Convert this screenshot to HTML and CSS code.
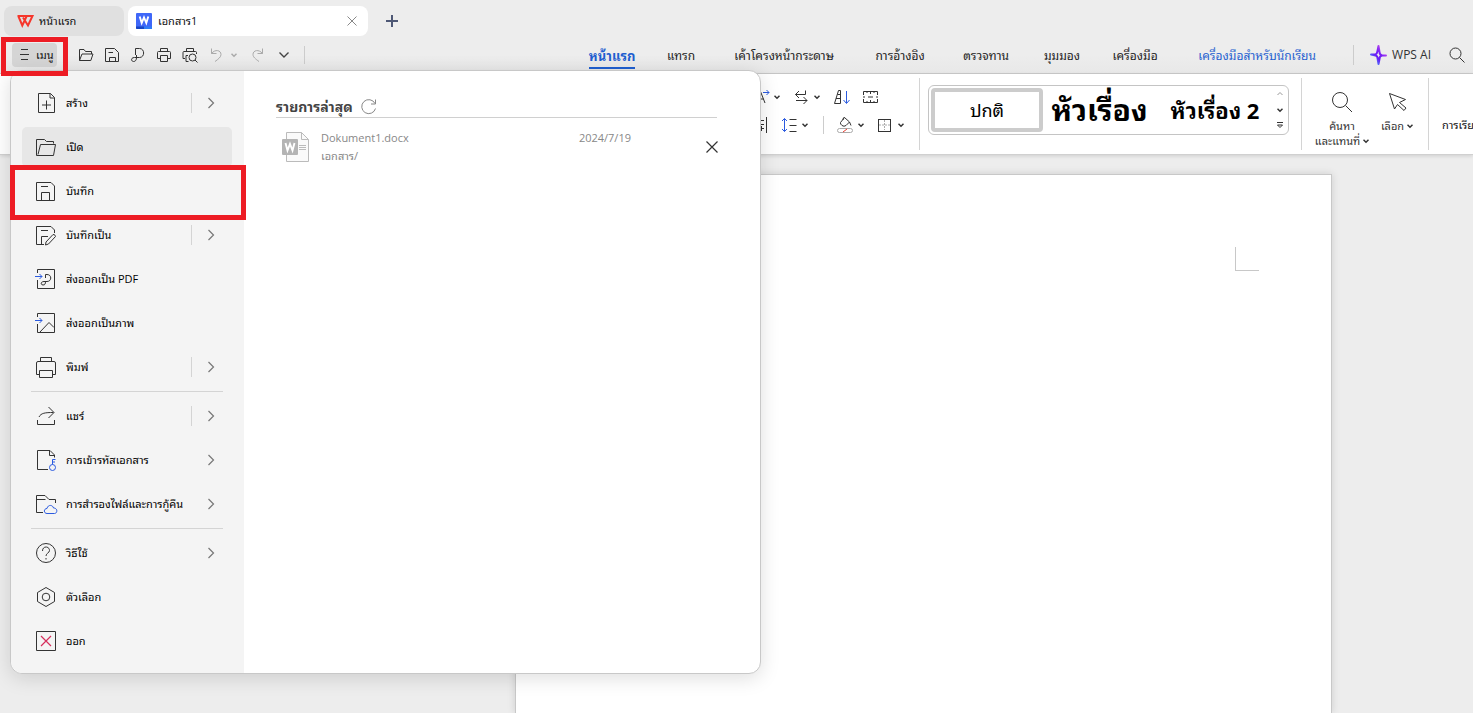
FILE: index.html
```html
<!DOCTYPE html>
<html lang="th">
<head>
<meta charset="utf-8">
<meta name="viewport" content="width=device-width, initial-scale=1">
<title>เอกสาร1</title>
<link rel="stylesheet" href="styles.css">
</head>
<body>
<svg class="defs" aria-hidden="true">
  <defs>
    <linearGradient id="ai" x1="0" y1="1" x2="1" y2="0">
      <stop offset="0" stop-color="#35c8ff"/><stop offset=".4" stop-color="#6a1cf5"/><stop offset=".6" stop-color="#7a22f5"/><stop offset="1" stop-color="#f56be8"/>
    </linearGradient>
    <symbol id="caret" viewBox="0 0 6 6"><path d="M.5 1.8 3 4.2 5.500 1.800" fill="none" stroke="currentColor" stroke-width="1.5"/></symbol>
    <symbol id="next" viewBox="0 0 8 12"><path d="M1.500 1 6.500 6 1.500 11" fill="none" stroke="currentColor" stroke-width="1.2"/></symbol>
  </defs>
</svg>

<header>
  <div class="tabs">
    <button class="tab">
      <svg width="16" height="12" viewBox="0 0 16 12" fill="none" stroke="#f5362b" stroke-width="2"><path d="M.5 1H15.500L11 10.500 6 2.500M1.300 1 5.300 10.500 9.500 1.500"/></svg>
      <span>หน้าแรก</span>
    </button>
    <div class="tab current">
      <svg width="16" height="16" viewBox="0 0 16 16"><rect width="16" height="16" rx="1" fill="#3f67f8"/><path d="M0 13.500H8V16H1a1 1 0 0 1-1-1z" fill="#1745c4"/><path d="M8 13.500H16V16H8z" fill="#2f7cf6"/><path d="M3.700 3.500 5.700 10 8 4.500 10.300 10 12.300 3.500" fill="none" stroke="#fff" stroke-width="1.9"/></svg>
      <span>เอกสาร1</span>
      <button class="plain close" aria-label="ปิด"><svg width="10" height="10" viewBox="0 0 10 10" stroke="#888"><path d="M.5.5 9.500 9.500M9.500.5.5 9.500"/></svg></button>
    </div>
    <button class="plain add" aria-label="เพิ่ม"><svg width="12" height="12" viewBox="0 0 12 12" stroke="#4e5875" stroke-width="2"><path d="M6 0V12M0 6H12"/></svg></button>
  </div>

  <div class="toolbar">
    <button class="menu-button marked">
      <svg width="9" height="11" viewBox="0 0 9 11" stroke="#333"><path d="M1 .5H8M0 5.500H9M1 10.500H8"/></svg>
      <span>เมนู</span>
    </button>
    <div class="quick">
      <button class="plain" aria-label="เปิด"><svg width="16" height="16" viewBox="0 0 16 16" class="ico"><path d="M1.500 13.500V2.500H6L7.500 4.500H13.500V7M1.500 13.500 4 7H15L12.800 13.500z"/></svg></button>
      <button class="plain" aria-label="บันทึก"><svg width="16" height="16" viewBox="0 0 16 16" class="ico"><path d="M1.500 1.500H10.500L14.500 5.500V14.500H1.500zM4.500 5.500H9M5.500 14.500V10.500H11.500V14.500"/></svg></button>
      <button class="plain" aria-label="PDF"><svg width="16" height="16" viewBox="0 0 16 16" class="ico"><path d="M5.500 8V1.500H9.500C15 1.500 15 10.500 9.500 10.500H4.500C.5 10.500 1 14.500 3.500 14.500 5.500 14.500 6.500 13 6.500 10.500V8"/></svg></button>
      <button class="plain" aria-label="พิมพ์"><svg width="16" height="16" viewBox="0 0 16 16" class="ico"><path d="M4.500 4.500V1.500H11.500V4.500M4 11.500H1.500V5.500Q1.500 4.500 2.500 4.500H13.500Q14.500 4.500 14.500 5.500V11.500H12M4.500 8.500H11.500V14.500H4.500z"/></svg></button>
      <button class="plain" aria-label="ตัวอย่าง"><svg width="16" height="16" viewBox="0 0 16 16" class="ico"><path d="M4.500 4.500V1.500H11.500V4.500M3 11.500H1V5.500Q1 4.500 2 4.500H13.500Q14.500 4.500 14.500 5.500V7M4 14.500V8.500H6M4 14.500H6.500M13 13 15.500 15.500"/><circle cx="10.500" cy="10.500" r="3.500"/></svg></button>
      <button class="plain faint" aria-label="เลิกทำ"><svg width="16" height="16" viewBox="0 0 16 16" class="ico"><path d="M3.500 1.500V6.500H8.500M3.500 6.500C7 2 13 3 13 7.500 13 10 10.500 12 7 14.500"/></svg></button>
      <button class="plain faint small" aria-label="รายการเลิกทำ"><svg width="6" height="6"><use href="#caret"/></svg></button>
      <button class="plain faint" aria-label="ทำซ้ำ"><svg width="16" height="16" viewBox="0 0 16 16" class="ico"><path d="M12.500 1.500V6.500H7.500M12.500 6.500C9 2 3 3 3 7.500 3 10 5.500 12 9 14.500"/></svg></button>
      <button class="plain" aria-label="เพิ่มเติม"><svg width="10" height="6" viewBox="0 0 10 6" fill="none" stroke="#444" stroke-width="1.4"><path d="M.5.5 5 5 9.500.5"/></svg></button>
    </div>
    <nav class="ribbon-tabs">
      <a href="#" class="on">หน้าแรก</a>
      <a href="#">แทรก</a>
      <a href="#">เค้าโครงหน้ากระดาษ</a>
      <a href="#">การอ้างอิง</a>
      <a href="#">ตรวจทาน</a>
      <a href="#">มุมมอง</a>
      <a href="#">เครื่องมือ</a>
      <a href="#" class="student">เครื่องมือสำหรับนักเรียน</a>
    </nav>
    <div class="assist">
      <button class="plain ai">
        <svg width="17" height="20" viewBox="0 0 17 20" fill="none" stroke="url(#ai)" stroke-width="2" stroke-linejoin="round"><path d="M1 9.500H5.500Q7 9 7.500 6L8.500 1 9.500 7Q9.500 9.500 12 10.500H16 12Q9.500 11 9.500 14L8.500 19 7.500 13Q7.500 11 5.500 10.500z"/></svg>
        <span>WPS AI</span>
      </button>
      <button class="plain" aria-label="ค้นหา"><svg width="16" height="16" viewBox="0 0 16 16" class="ico"><circle cx="6.500" cy="6.500" r="5.500"/><path d="M10.500 10.500 15.500 15.500"/></svg></button>
    </div>
  </div>
</header>

<section class="ribbon">
  <div class="paragraph">
    <div class="line">
      <button class="plain split"><svg width="20" height="16" viewBox="0 0 20 16" class="ico"><path d="M5 14 9.500 2.500 14 14M6.500 10H12.500"/><path class="blue" d="M12 3.500H18M15.500 1 18 3.500 15.500 6"/></svg><svg width="6" height="6"><use href="#caret"/></svg></button>
      <button class="plain split"><svg width="20" height="16" viewBox="0 0 20 16" class="ico"><path d="M14.500 1.500V5.500H4.500M8 2 4.500 5.500 8 9M5 11.500H16M12.500 8 16 11.500 12.500 15"/></svg><svg width="6" height="6"><use href="#caret"/></svg></button>
      <button class="plain sort"><svg width="20" height="16" viewBox="0 0 20 16" class="ico"><path d="M2.500 14.500 6.500 1.500H8.500V14.500zM5.500 5.500H8.500M4 9.500H8.500"/><path class="blue" d="M14.500 2V14M11.500 11 14.500 14.500 17.500 11"/></svg></button>
      <button class="plain ruler"><svg width="20" height="16" viewBox="0 0 20 16" class="ico"><path d="M3.500 6V2.500H17.500V6M10.500 2.500V5M7 2.500V4M14 2.500V4M3.500 10V13.500H17.500V10M10.500 13.500V11M7 13.500V12M14 13.500V12M3 8H5M8 8H13M16 8H18"/></svg></button>
    </div>
    <div class="line second">
      <button class="plain"><svg width="20" height="16" viewBox="0 0 20 16" class="ico"><path d="M15.500 0V16M7 3.500H13M7 7.500H13M7 11.500H13M10.500 9V14"/></svg></button>
      <button class="plain split"><svg width="20" height="16" viewBox="0 0 20 16" class="ico"><path class="blue" d="M5.500 1.500V14.500M3 4 5.500 1.500 8 4M3 12 5.500 14.500 8 12"/><path d="M10.500 2.500H17.500M10.500 8.500H17.500M10.500 14.500H17.500"/></svg><svg width="6" height="6"><use href="#caret"/></svg></button>
      <i class="rule"></i>
      <button class="plain split"><svg width="20" height="16" viewBox="0 0 20 16" class="ico"><path d="M9.500.5 5.500 5.500Q5 7 7 8.500 9 10 11 8.500L14.500 5 9.500.5Q8 0 8 3M14.500 5 16 8.500"/><rect x="2.500" y="11.500" width="15" height="4" rx="2" fill="#fff" stroke="#aaa"/><path d="M8 15 12 12" stroke="#e53a2e"/></svg><svg width="6" height="6"><use href="#caret"/></svg></button>
      <button class="plain split borders"><svg width="20" height="16" viewBox="0 0 20 16" class="ico"><path stroke="#aaa" stroke-dasharray="2 1" d="M9.500 3V13M4 8H15"/><rect x="3.500" y="2.500" width="12" height="12"/></svg><svg width="6" height="6"><use href="#caret"/></svg></button>
    </div>
  </div>

  <div class="gallery-group">
    <div class="gallery">
      <button class="style normal">ปกติ</button>
      <button class="style h1">หัวเรื่อง</button>
      <button class="style h2">หัวเรื่อง 2</button>
      <div class="scroll">
        <svg width="6" height="6" viewBox="0 0 6 6" class="ico"><path stroke="#999" d="M.5 4 3 1.500 5.500 4"/></svg>
        <svg width="6" height="6"><use href="#caret"/></svg>
        <svg width="8" height="7" viewBox="0 0 8 7" class="ico"><path d="M1 .5H7M1.500 3 4 5.500 6.500 3z"/></svg>
      </div>
    </div>
  </div>

  <div class="find-group">
    <button class="plain tall find">
      <svg width="22" height="22" viewBox="0 0 22 22" class="ico"><circle cx="9" cy="9" r="7.500"/><path d="M14.500 14.500 21 21"/></svg>
      <span>ค้นหา</span><span>และแทนที่ <svg width="6" height="6"><use href="#caret"/></svg></span>
    </button>
    <button class="plain tall select">
      <svg width="22" height="22" viewBox="0 0 22 22" class="ico"><path d="M3.500 2.500 19.500 8.500 13.500 11.500 20 17 18 19.500 11.500 13.500 8.500 18z"/></svg>
      <span>เลือก <svg width="6" height="6"><use href="#caret"/></svg></span>
    </button>
  </div>
  <div class="last-group"><span>การเรีย</span></div>
</section>

<main class="desk">
  <article class="page"><i class="corner"></i></article>
</main>

<section class="menu">
  <ul class="side">
    <li><button class="item"><svg width="20" height="22" viewBox="0 0 20 22" class="ico"><path d="M2.500 1.500H14.500L18.500 5.500V20.500H2.500zM14 1.500V6H18.500M6 13H15M10.500 8.500V17.500"/></svg><span>สร้าง</span><i class="bar"></i><svg class="go" width="8" height="12"><use href="#next"/></svg></button></li>
    <li><button class="item hover"><svg width="20" height="22" viewBox="0 0 20 22" class="ico"><path d="M.5 19.500V3.500H8.500L10.500 5.500H17.500V7.500M.5 19.500H17.500L19.500 8.500H4.500L2 18.500"/></svg><span>เปิด</span></button></li>
    <li class="marked-row"><button class="item"><svg width="20" height="22" viewBox="0 0 20 22" class="ico"><path d="M.5 2.500H15L18.500 6V20.500H.5zM5 6.500H12M5.500 20.500V12.500H13.500V20.500"/></svg><span>บันทึก</span></button></li>
    <li><button class="item"><svg width="20" height="22" viewBox="0 0 20 22" class="ico"><path d="M8 20.500H.5V2.500H15L18.500 6V9M5 6.500H12M5.500 20.500V12.500H12M10 18 17 10.500Q19 10 19.500 12.500L12.500 20 9.500 21z"/></svg><span>บันทึกเป็น</span><i class="bar"></i><svg class="go" width="8" height="12"><use href="#next"/></svg></button></li>
    <li><button class="item"><svg width="20" height="22" viewBox="0 0 20 22" class="ico"><path d="M1.500 5V1.500H18.500V20.500H1.500V12M9.500 10V6.500H11C16 6.500 16 13.500 11 13.500H8C4.500 13.500 4.500 17 7 17 9 17 9.500 16 9.500 13"/><path class="blue" d="M-1 8.500H6M3.500 6 6 8.500 3.500 11"/></svg><span>ส่งออกเป็น PDF</span></button></li>
    <li><button class="item"><svg width="20" height="22" viewBox="0 0 20 22" class="ico"><path d="M1.500 5V1.500H18.500V20.500H1.500V12M4 20 13 10.500 18 15.500"/><path class="blue" d="M-1 8.500H6M3.500 6 6 8.500 3.500 11"/></svg><span>ส่งออกเป็นภาพ</span></button></li>
    <li><button class="item"><svg width="20" height="22" viewBox="0 0 20 22" class="ico"><path d="M4.500 5.500V1.500H15.500V5.500M3.500 18.500H.5V7Q.5 5.500 2 5.500H18Q19.500 5.500 19.500 7V18.500H16.500M3.500 14.500H16.500V21.500H3.500z"/></svg><span>พิมพ์</span><i class="bar"></i><svg class="go" width="8" height="12"><use href="#next"/></svg></button></li>
    <li class="split-line"></li>
    <li><button class="item"><svg width="20" height="22" viewBox="0 0 20 22" class="ico"><path d="M1.500 15V19.500H18.500V15M3 12C5 8 9 7.500 17.500 7.500M12.500 2 18 7.500 12.500 13"/></svg><span>แชร์</span><i class="bar"></i><svg class="go" width="8" height="12"><use href="#next"/></svg></button></li>
    <li><button class="item"><svg width="20" height="22" viewBox="0 0 20 22" class="ico"><path d="M12 20.500H1.500V1.500H14L18.500 6V8.500M13.500 1.500V6.500H18.500"/><path class="blue" d="M16.500 15.500V10.500H19.500M16.500 13H19"/><circle class="blue" cx="16.500" cy="18.500" r="3"/></svg><span>การเข้ารหัสเอกสาร</span><svg class="go" width="8" height="12"><use href="#next"/></svg></button></li>
    <li><button class="item"><svg width="20" height="22" viewBox="0 0 20 22" class="ico"><path d="M7 19.500H.5V2.500H9L13 6.500H19.500V10M.5 6.500H9.500"/><path class="blue" d="M11 20.500C7.500 20.500 7.500 15.500 11 15.500 12 11 17 12 17.500 15 22 15 21.500 20.500 18.500 20.500z"/></svg><span>การสำรองไฟล์และการกู้คืน</span><svg class="go" width="8" height="12"><use href="#next"/></svg></button></li>
    <li class="split-line"></li>
    <li><button class="item"><svg width="20" height="22" viewBox="0 0 20 22" class="ico"><circle cx="10" cy="11" r="9.500"/><path d="M6.500 9C6.500 3.500 13.500 4 13.500 8.500 13.500 11 10 11 10 14M10 16V17.500"/></svg><span>วิธีใช้</span><svg class="go" width="8" height="12"><use href="#next"/></svg></button></li>
    <li><button class="item"><svg width="20" height="22" viewBox="0 0 20 22" class="ico"><path d="M10 1.500 18.500 6.500V15.500L10 20.500 1.500 15.500V6.500z"/><circle cx="10" cy="11" r="3.800"/></svg><span>ตัวเลือก</span></button></li>
    <li><button class="item"><svg width="20" height="22" viewBox="0 0 20 22" class="ico"><path d="M.5 1.500H19.500V20.500H.5z"/><path stroke="#d62e5c" stroke-width="1.2" d="M5 6 15 16M15 6 5 16"/></svg><span>ออก</span></button></li>
  </ul>
  <div class="recent">
    <div class="recent-head"><h2>รายการล่าสุด</h2>
      <button class="plain" aria-label="รีเฟรช"><svg width="16" height="16" viewBox="0 0 16 16" fill="none" stroke="#888"><path d="M14 4.500A7 7 0 1 0 14.500 9.500M14.500.5V5H10"/></svg></button>
    </div>
    <div class="file">
      <svg width="28" height="30" viewBox="0 0 28 30"><path d="M4.500.5H19.500L26.500 7.500V29.500H4.500z" fill="#fafafa" stroke="#bbb"/><path d="M19.500.5V7.500H26.500M17 13.500H24M17 15.500H24M17 17.500H24" fill="none" stroke="#bbb"/><rect y="7" width="16" height="16" rx="1" fill="#b4b4b4"/><path d="M3.500 11 5.500 18.500 8 12 10.500 18.500 12.500 11" fill="none" stroke="#fff" stroke-width="1.900"/></svg>
      <div class="name"><span>Dokument1.docx</span><span>เอกสาร/</span></div>
      <time>2024/7/19</time>
      <button class="plain remove" aria-label="ลบ"><svg width="12" height="12" viewBox="0 0 12 12" stroke="#333" stroke-width="1.2"><path d="M.5.5 11.500 11.500M11.500.5.5 11.500"/></svg></button>
    </div>
  </div>
</section>
</body>
</html>
```

FILE: styles.css
```css
* { box-sizing: border-box; }
body {
  margin: 0;
  min-height: 100vh;
  display: flex;
  flex-direction: column;
  position: relative;
  overflow: hidden;
  background: #ededed;
  color: #111;
  font: 12px/16px "Open Sans", "Noto Sans Thai Looped", "Noto Looped Thai", "Leelawadee UI", "Loma", "Noto Sans", sans-serif;
}
button { font: inherit; color: inherit; border: 0; background: none; padding: 0; margin: 0; white-space: nowrap; }
svg { display: block; flex: none; overflow: visible; }
.defs { position: absolute; width: 0; height: 0; }
.ico { fill: none; stroke: #333; stroke-width: 1; }
.ico .blue { stroke: #2b5be0; }
.plain { display: flex; align-items: center; justify-content: center; color: #333; }

.tabs { display: flex; align-items: center; gap: 4px; padding: 6px 4px 0; }
.tab { display: flex; align-items: center; gap: 6px; width: 120px; height: 30px; padding: 0 13px; border-radius: 8px; background: #e0e0e0; font-size: 11px; }
.tab.current { width: 240px; padding: 0 11px 0 8px; background: #fff; }
.close { margin-left: auto; }
.add { width: 40px; height: 30px; }

.toolbar { display: flex; align-items: center; height: 38px; padding: 0 8px 0 12px; background: linear-gradient(#ededed 50%, #e8e8e8); border-bottom: 1px solid #ccc; }
.menu-button { display: flex; align-items: center; gap: 7px; height: 24px; width: 45px; padding-left: 8px; border-radius: 4px; background: #d5d5d5; position: relative; font-size: 11px; }
.marked::after { content: ""; position: absolute; z-index: 20; inset: -6px -11px -9px; border: 5px solid #ed1c24; }
.quick { display: flex; align-items: center; margin-left: 16px; padding-right: 7px; border-right: 1px solid #ccc; height: 18px; }
.quick .plain { width: 26px; }
.quick .small { width: 10px; margin-right: 6px; }
.faint { color: #aaa; }
.quick .faint { color: #aaa; }
.faint .ico { stroke: #aaa; }
.ribbon-tabs { display: grid; grid-template-columns: 72px 66px 140px 92px 80px 72px 74px 170px; margin-left: auto; height: 28px; }
.ribbon-tabs a { justify-self: center; color: #222; text-decoration: none; white-space: nowrap; height: 28px; line-height: 30px; }
.ribbon-tabs .on { color: #1f5fd0; font-size: 13px; font-weight: bold; border-bottom: 2px solid #1f5fd0; }
.ribbon-tabs .student { color: #1f5fd0; }
.assist { display: flex; align-items: center; gap: 18px; height: 20px; margin-left: 11px; padding-left: 16px; border-left: 1px solid #ccc; }
.ai { gap: 5px; white-space: nowrap; }

.ribbon { display: flex; height: 81px; padding: 4px 0 4px 751px; background: #fff; border-bottom: 1px solid #d0d0d0; box-shadow: 0 1px 4px #0002; overflow: hidden; flex: none; }
.ribbon > div { flex: none; }
.paragraph { width: 169px; padding-top: 11px; border-right: 1px solid #d4d4d4; }
.line { display: flex; align-items: center; gap: 11px; height: 16px; }
.line.second { margin-top: 12px; gap: 8px; }
.split { gap: 3px; }
.sort { margin-left: 1px; }
.ruler { margin-left: -3px; }
.borders { margin-left: 3px; }
.rule { width: 1px; height: 18px; margin: 0 3px 0 7px; background: #ccc; }
.gallery-group { padding: 7px 12px 0 8px; border-right: 1px solid #d4d4d4; }
.gallery { display: grid; grid-template-columns: 112px 113px 118px 12px; height: 50px; padding: 2px; border: 1px solid #c4c4c4; border-radius: 6px; }
.style { color: #000; font-weight: bold; }
.normal { font-size: 18px; font-weight: normal; border: 4px solid #ccc; border-radius: 4px; }
.h1 { font-size: 30px; }
.h2 { font-size: 22px; }
.scroll { display: flex; flex-direction: column; align-items: center; justify-content: space-between; padding: 3px 0; color: #333; }
.find-group { display: flex; align-items: flex-start; padding: 13px 4px 0 12px; border-right: 1px solid #d4d4d4; }
.tall { flex-direction: column; line-height: 15px; font-size: 11px; }
.tall > svg { margin-bottom: 5px; }
.tall span { display: flex; align-items: center; gap: 3px; }
.find { width: 56px; }
.select { width: 54px; }
.last-group { padding: 39px 0 0 13px; font-size: 11px; white-space: nowrap; }

.desk { flex: 1; display: flex; padding: 19px 141px 0 515px; }
.page { flex: 1; display: flex; justify-content: flex-end; align-items: flex-start; padding: 72px 72px 0; background: #fff; border: 1px solid #c8c8c8; border-bottom: 0; box-shadow: 0 0 8px #0002; }
.corner { width: 24px; height: 24px; border: solid #c8c8c8; border-width: 0 0 1px 1px; }

.menu { position: absolute; z-index: 10; top: 70px; left: 10px; width: 751px; display: flex; background: #fff; border: 1px solid #c8c8c8; border-radius: 12px; box-shadow: 0 4px 20px #0002; }
.side { list-style: none; margin: 0; padding: 10px 12px 10px 11px; width: 233px; background: #f4f4f4; border-radius: 12px 0 0 12px; font-size: 11px; }
.side li { padding: 2px 0; position: relative; }
.item { display: flex; align-items: center; width: 100%; height: 40px; padding: 0 17px 0 14px; border-radius: 5px; text-align: left; color: #000; }
.item span { margin: 0 auto 0 10px; }
.item .go { color: #777; }
.bar { width: 1px; height: 20px; margin-right: 15px; background: #d4d4d4; }
.hover { background: #e7e7e7; }
.marked-row::after { content: ""; position: absolute; inset: -4px -14px -7px -12px; border: 5px solid #ed1c24; pointer-events: none; z-index: 1; }
.side .split-line { height: 1px; padding: 0; margin: 2px 9px; background: #d4d4d4; }
.recent { flex: 1; padding: 26px 43px 0 32px; }
.recent-head { display: flex; align-items: center; gap: 8px; height: 21px; border-bottom: 1px solid #d0d0d0; }
.recent h2 { margin: 0; font-size: 14px; color: #444; }
.file { display: flex; align-items: center; padding: 11px 0 0 6px; color: #888; font-size: 11px; }
.name { display: flex; flex-direction: column; margin-left: 11px; line-height: 18px; }
.file time { margin: 0 75px 0 auto; align-self: flex-start; line-height: 18px; }
.remove { margin-right: -1px; }
```
